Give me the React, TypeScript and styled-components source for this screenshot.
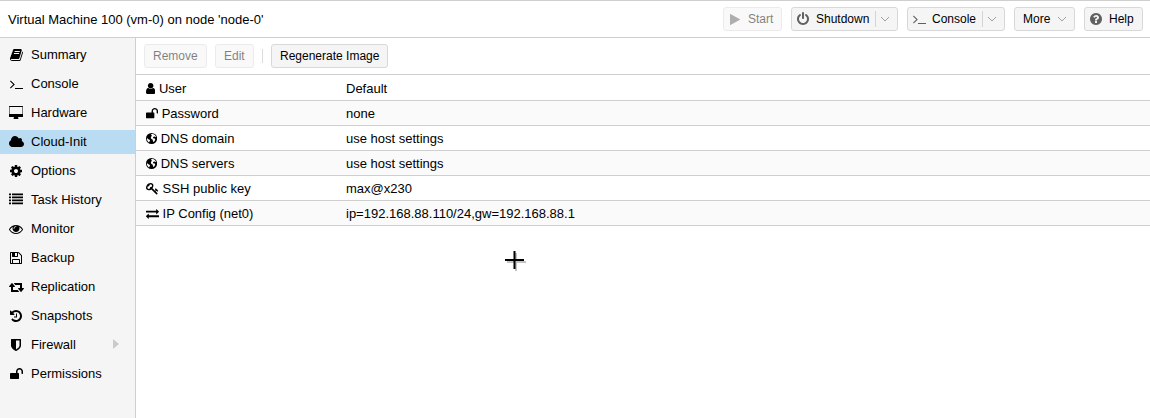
import styled, { createGlobalStyle } from 'styled-components';

const GlobalStyle = createGlobalStyle`
  * {
    box-sizing: border-box;
  }

  body {
    margin: 0;
    background: #fff;
    color: #000;
    font-family: 'Liberation Sans', Arial, sans-serif;
    font-size: 13px;
    overflow: hidden;
  }
`;

// [x offset, width, path], all glyphs are 1792 units high
const icons = {
  book: [64, 1664, 'M1703 478q40 57 18 129l-275 906q-19 64-76.5 107.5t-122.5 43.5h-923q-77 0-148.5-53.5t-99.5-131.5q-24-67-2-127 0-4 3-27t4-37q1-8-3-21.5t-3-19.5q2-11 8-21t16.5-23.5 16.5-23.5q23-38 45-91.5t30-91.5q3-10 .5-30t-.5-28q3-11 17-28t17-23q21-36 42-92t25-90q1-9-2.5-32t.5-28q4-13 22-30.5t22-22.5q19-26 42.5-84.5t27.5-96.5q1-8-3-25.5t-2-26.5q2-8 9-18t18-23 17-21q8-12 16.5-30.5t15-35 16-36 19.5-32 26.5-23.5 36-11.5 47.5 5.5l-1 3q38-9 51-9h761q74 0 114 56t18 130l-274 906q-36 119-71.5 153.5t-128.5 34.5h-869q-27 0-38 15-11 16-1 43 24 70 144 70h923q29 0 56-15.5t35-41.5l300-987q7-22 5-57 38 15 59 43zm-1064 2q-4 13 2 22.5t20 9.5h608q13 0 25.5-9.5t16.5-22.5l21-64q4-13-2-22.5t-20-9.5h-608q-13 0-25.5 9.5t-16.5 22.5zm-83 256q-4 13 2 22.5t20 9.5h608q13 0 25.5-9.5t16.5-22.5l21-64q4-13-2-22.5t-20-9.5h-608q-13 0-25.5 9.5t-16.5 22.5z'],
  terminal: [64, 1664, 'M649 983l-466 466q-10 10-23 10t-23-10l-50-50q-10-10-10-23t10-23l393-393-393-393q-10-10-10-23t10-23l50-50q10-10 23-10t23 10l466 466q10 10 10 23t-10 23zm1079 457v64q0 14-9 23t-23 9h-960q-14 0-23-9t-9-23v-64q0-14 9-23t23-9h960q14 0 23 9t9 23z'],
  desktop: [0, 1856, 'M1728 992v-832q0-13-9.5-22.5t-22.5-9.5h-1600q-13 0-22.5 9.5t-9.5 22.5v832q0 13 9.5 22.5t22.5 9.5h1600q13 0 22.5-9.5t9.5-22.5zm128-832v1088q0 66-47 113t-113 47h-544q0 37 16 77.5t32 71 16 43.5q0 26-19 45t-45 19h-512q-26 0-45-19t-19-45q0-14 16-44t32-70 16-78h-544q-66 0-113-47t-47-113v-1088q0-66 47-113t113-47h1600q66 0 113 47t47 113z'],
  cloud: [64, 1920, 'M1984 1152q0 159-112.5 271.5t-271.5 112.5h-1088q-185 0-316.5-131.5t-131.5-316.5q0-132 71-241.5t187-163.5q-2-28-2-43 0-212 150-362t362-150q158 0 286.5 88t187.5 230q70-62 166-62 106 0 181 75t75 181q0 75-41 138 129 30 213 134.5t84 239.5z'],
  cog: [128, 1536, 'M1152 896q0-106-75-181t-181-75-181 75-75 181 75 181 181 75 181-75 75-181zm512-109v222q0 12-8 23t-20 13l-185 28q-19 54-39 91 35 50 107 138 10 12 10 25t-9 23q-27 37-99 108t-94 71q-12 0-26-9l-138-108q-44 23-91 38-16 136-29 186-7 28-36 28h-222q-14 0-24.5-8.5t-11.5-21.5l-28-184q-49-16-90-37l-141 107q-10 9-25 9-14 0-25-11-126-114-165-168-7-10-7-23 0-12 8-23 15-21 51-66.5t54-70.5q-27-50-41-99l-183-27q-13-2-21-12.5t-8-23.5v-222q0-12 8-23t19-13l186-28q14-46 39-92-40-57-107-138-10-12-10-24 0-10 9-23 26-36 98.5-107.5t94.5-71.5q13 0 26 10l138 107q44-23 91-38 16-136 29-186 7-28 36-28h222q14 0 24.5 8.5t11.5 21.5l28 184q49 16 90 37l142-107q9-9 24-9 13 0 25 10 129 119 165 170 7 8 7 22 0 12-8 23-15 21-51 66.5t-54 70.5q26 50 41 98l183 28q13 2 21 12.5t8 23.5z'],
  list: [0, 1792, 'M0 64h256v224H0zM384 64h1408v224H384zM0 448h256v224H0zM384 448h1408v224H384zM0 832h256v224H0zM384 832h1408v224H384zM0 1216h256v224H0zM384 1216h1408v224H384z'],
  eye: [0, 1792, 'M1664 960q-152-236-381-353 61 104 61 225 0 185-131.5 316.5t-316.5 131.5-316.5-131.5-131.5-316.5q0-121 61-225-229 117-381 353 133 205 333.5 326.5t434.5 121.5 434.5-121.5 333.5-326.5zm-720-384q0-20-14-34t-34-14q-125 0-214.5 89.5t-89.5 214.5q0 20 14 34t34 14 34-14 14-34q0-86 61-147t147-61q20 0 34-14t14-34zm848 384q0 34-20 69-140 230-376.5 368.5t-499.5 138.5-499.5-139-376.5-368q-20-35-20-69t20-69q140-229 376.5-368t499.5-139 499.5 139 376.5 368q20 35 20 69z'],
  floppy: [128, 1536, 'M512 1536h768v-384h-768v384zm896 0h128v-896q0-14-10-38.5t-20-34.5l-281-281q-10-10-34-20t-39-10v416q0 40-28 68t-68 28h-576q-40 0-68-28t-28-68v-416h-128v1280h128v-416q0-40 28-68t68-28h832q40 0 68 28t28 68v416zm-384-928v-320q0-13-9.5-22.5t-22.5-9.5h-192q-13 0-22.5 9.5t-9.5 22.5v320q0 13 9.5 22.5t22.5 9.5h192q13 0 22.5-9.5t9.5-22.5zm640 32v928q0 40-28 68t-68 28h-1344q-40 0-68-28t-28-68v-1344q0-40 28-68t68-28h928q40 0 88 20t76 48l280 280q28 28 48 76t20 88z'],
  retweet: [0, 1920, 'M1280 1504q0 13-9.5 22.5t-22.5 9.5h-960q-8 0-13.5-2t-9-7-5.5-8-3-11.5-1-11.5v-600h-192q-26 0-45-19t-19-45q0-24 15-41l320-384q19-22 49-22t49 22l320 384q15 17 15 41 0 26-19 45t-45 19h-192v384h576q16 0 25 11l160 192q7 10 7 21zm640-416q0 24-15 41l-320 384q-20 23-49 23t-49-23l-320-384q-15-17-15-41 0-26 19-45t45-19h192v-384h-576q-16 0-25-12l-160-192q-7-9-7-20 0-13 9.5-22.5t22.5-9.5h960q8 0 13.5 2t9 7 5.5 8 3 11.5 1 11.5v600h192q26 0 45 19t19 45z'],
  history: [128, 1536, 'M1664 896q0 156-61 298t-164 245-245 164-298 61q-172 0-327-72.5t-264-204.5q-7-10-6.5-22.5t8.5-20.5l137-138q10-9 25-9 16 2 23 12 73 95 179 147t225 52q104 0 198.5-40.5t163.5-109.5 109.5-163.5 40.5-198.5-40.5-198.5-109.5-163.5-163.5-109.5-198.5-40.5q-98 0-188 35.5t-160 101.5l137 138q31 30 14 69-17 40-59 40h-448q-26 0-45-19t-19-45v-448q0-42 40-59 39-17 69 14l130 129q107-101 244.5-156.5t284.5-55.5q156 0 298 61t245 164 164 245 61 298zm-640-288v448q0 14-9 23t-23 9h-320q-14 0-23-9t-9-23v-64q0-14 9-23t23-9h224v-352q0-14 9-23t23-9h64q14 0 23 9t9 23z'],
  shield: [256, 1280, 'M1344 960v-640h-448v1137q119-63 213-137 235-184 235-360zm192-768v768q0 86-33.5 170.5t-83 150-118 127.5-126.5 103-121 77.5-89.5 49.5-42.5 20q-12 6-26 6t-26-6q-16-7-42.5-20t-89.5-49.5-121-77.5-126.5-103-118-127.5-83-150-33.5-170.5v-768q0-26 19-45t45-19h1152q26 0 45 19t19 45z'],
  unlock: [64, 1664, 'M1728 576v256q0 26-19 45t-45 19h-64q-26 0-45-19t-19-45v-256q0-106-75-181t-181-75-181 75-75 181v192h96q40 0 68 28t28 68v576q0 40-28 68t-68 28h-960q-40 0-68-28t-28-68v-576q0-40 28-68t68-28h672v-192q0-185 131.5-316.5t316.5-131.5 316.5 131.5 131.5 316.5z'],
  play: [192, 1408, 'M1576 927l-1328 738q-23 13-39.5 3t-16.5-36v-1472q0-26 16.5-36t39.5 3l1328 738q23 13 23 31t-23 31z'],
  power: [128, 1536, 'M1664 896q0 156-61 298t-164 245-245 164-298 61-298-61-245-164-164-245-61-298q0-182 80.5-343t226.5-270q43-32 95.5-25t83.5 50q32 42 24.5 94.5t-49.5 84.5q-98 74-151.5 181t-53.5 228q0 104 40.5 198.5t109.5 163.5 163.5 109.5 198.5 40.5 198.5-40.5 163.5-109.5 109.5-163.5 40.5-198.5q0-121-53.5-228t-151.5-181q-42-32-49.5-84.5t24.5-94.5q31-43 84-50t95 25q146 109 226.5 270t80.5 343zm-640-768v640q0 52-38 90t-90 38-90-38-38-90v-640q0-52 38-90t90-38 90 38 38 90z'],
  question: [128, 1536, 'M1024 1376v-192q0-14-9-23t-23-9h-192q-14 0-23 9t-9 23v192q0 14 9 23t23 9h192q14 0 23-9t9-23zm256-672q0-88-55.5-163t-138.5-116-170-41q-243 0-371 213-15 24 8 42l132 100q7 6 19 6 16 0 25-12 53-68 86-92 34-24 86-24 48 0 85.5 26t37.5 59q0 38-20 61t-68 45q-63 28-115.5 86.5t-52.5 125.5v36q0 14 9 23t23 9h192q14 0 23-9t9-23q0-19 21.5-49.5t54.5-49.5q32-18 49-28.5t46-35 44.5-48 28-60.5 12.5-81zm384 192q0 209-103 385.5t-279.5 279.5-385.5 103-385.5-103-279.5-279.5-103-385.5 103-385.5 279.5-279.5 385.5-103 385.5 103 279.5 279.5 103 385.5z'],
  user: [256, 1280, 'M1536 1399q0 109-62.5 187t-150.5 78h-854q-88 0-150.5-78t-62.5-187q0-85 8.5-160.5t31.5-152 58.5-131 94-89 134.5-34.5q131 128 313 128t313-128q76 0 134.5 34.5t94 89 58.5 131 31.5 152 8.5 160.5zm-256-887q0 159-112.5 271.5t-271.5 112.5-271.5-112.5-112.5-271.5 112.5-271.5 271.5-112.5 271.5 112.5 112.5 271.5z'],
  globe: [128, 1536, 'M896 128a768 768 0 1 0 0 1536a768 768 0 1 0 0-1536zM960 250L1180 300L1350 410L1480 580L1520 720L1400 640L1260 620L1130 690L1090 800L1180 900L1350 910L1400 1010L1360 1150L1260 1300L1150 1370L1090 1260L1060 1080L940 1000L820 900L800 740L880 600L980 530L860 460L820 350zM270 830L400 960L560 1030L680 1140L650 1260L580 1350L550 1440L420 1340L310 1180L260 990z'],
  key: [0, 1792, 'M832 512q0-80-56-136t-136-56-136 56-56 136q0 42 19 83-41-19-83-19-80 0-136 56t-56 136 56 136 136 56 136-56 56-136q0-42-19-83 41 19 83 19 80 0 136-56t56-136zm851 704q0 17-49 66t-66 49q-9 0-28.5-16t-36.5-33-38.5-40-24.5-26l-96 96 220 220q28 28 28 68 0 42-39 81t-81 39q-40 0-68-28l-671-671q-176 131-365 131-163 0-265.5-102.5t-102.5-265.5q0-160 95-313t248-248 313-95q163 0 265.5 102.5t102.5 265.5q0 189-131 365l355 355 96-96q-3-3-26-24.5t-40-38.5-33-36.5-16-28.5q0-17 49-66t66-49q13 0 23 10 6 6 46 44.5t82 79.5 86.5 86 73 78 28.5 41z'],
  exchange: [0, 1792, 'M1792 1184v192q0 13-9.5 22.5t-22.5 9.5h-1376v192q0 13-9.5 22.5t-22.5 9.5q-12 0-24-10l-319-320q-9-9-9-22 0-14 9-23l320-320q9-9 23-9 13 0 22.5 9.5t9.5 22.5v192h1376q13 0 22.5 9.5t9.5 22.5zm0-544q0 14-9 23l-320 320q-9 9-23 9-13 0-22.5-9.5t-9.5-22.5v-192h-1376q-13 0-22.5-9.5t-9.5-22.5v-192q0-13 9.5-22.5t22.5-9.5h1376v-192q0-14 9-23t23-9q12 0 24 10l319 319q9 9 9 23z'],
} as const;

type IconName = keyof typeof icons;

const Glyph = styled.svg`
  display: block;
  flex: none;
  fill: currentColor;
  fill-rule: evenodd;
`;

const Icon = ({ name, size }: { name: IconName; size: number }) => {
  const [x, width, d] = icons[name];
  return (
    <Glyph viewBox={`${x} 0 ${width} 1792`} width={(width * size) / 1792} height={size}>
      <path d={d} />
    </Glyph>
  );
};

const Page = styled.div`
  display: flex;
  flex-direction: column;
  width: 1150px;
  height: 418px;
  border-top: 1px solid #cfcfcf;
`;

const Header = styled.header`
  display: flex;
  align-items: center;
  flex: none;
  height: 37px;
  padding: 0 7px 0 8px;
  border-bottom: 1px solid #cfcfcf;
`;

const Title = styled.div`
  flex: 1;
  padding-top: 1px;
`;

const HeaderActions = styled.div`
  display: flex;
  gap: 9px;
`;

const Button = styled.button<{ $width: number }>`
  display: flex;
  align-items: center;
  flex: none;
  width: ${props => props.$width}px;
  height: 24px;
  padding: 0 0 0 8px;
  border: 1px solid #d8d8d8;
  border-radius: 3px;
  background: #f5f5f5;
  color: #000;
  font: 12px 'Liberation Sans', Arial, sans-serif;
  white-space: nowrap;

  &:disabled {
    opacity: 0.5;
  }
`;

const ButtonIcon = styled.span`
  display: flex;
  justify-content: center;
  width: 16px;
  margin: 0 5px 0 -5px;
  color: #606060;
`;

const SplitLine = styled.span`
  width: 1px;
  height: 16px;
  margin-left: 6px;
  background: #d4d4d4;
`;

const Chevron = styled.svg<{ $gap: number }>`
  width: 10px;
  height: 6px;
  margin-left: ${props => props.$gap}px;
  fill: none;
  stroke: #a0a0a0;
`;

const Arrow = ({ gap }: { gap: number }) => (
  <Chevron $gap={gap} viewBox="0 0 10 6">
    <path d="M1 1l4 4 4-4" />
  </Chevron>
);

const Body = styled.div`
  display: flex;
  flex: 1;
  min-height: 0;
`;

const Sidebar = styled.nav`
  flex: none;
  width: 136px;
  padding-top: 5px;
  background: #f5f5f5;
  border-right: 1px solid #cfcfcf;
`;

const NavItem = styled.div<{ $active?: boolean }>`
  display: flex;
  align-items: center;
  height: 24px;
  margin-bottom: 5px;
  padding: 0 0 2px 6px;
  background: ${props => (props.$active ? '#b9dcf2' : 'transparent')};
`;

const NavIcon = styled.span`
  display: flex;
  justify-content: center;
  width: 20px;
  margin-right: 5px;
  padding-top: 1px;
`;

const Expander = styled.span`
  margin: 0 16px 0 auto;
  border: solid transparent;
  border-width: 5px 0 5px 6px;
  border-left-color: #cbcbcb;
`;

const Main = styled.main`
  flex: 1;
  min-width: 0;
`;

const Toolbar = styled.div`
  display: flex;
  align-items: center;
  height: 37px;
  padding-left: 8px;
  border-bottom: 1px solid #cfcfcf;
`;

const ToolGap = styled.span`
  width: 8px;
`;

const Separator = styled.span`
  width: 1px;
  height: 14px;
  margin: 0 8px;
  background: #dcdcdc;
`;

const Row = styled.div`
  display: flex;
  align-items: center;
  height: 25px;
  padding: 1px 0 0 10px;
  border-bottom: 1px solid #cfcfcf;

  &:first-of-type {
    height: 26px;
    padding-top: 2px;
  }

  &:nth-child(even) {
    background: #fafafa;
  }
`;

const RowLabel = styled.div`
  display: flex;
  align-items: center;
  gap: 3.6px;
  width: 200px;
`;

const Crosshair = styled.svg`
  position: absolute;
  left: 502px;
  top: 249px;
`;

const navItems: { icon: IconName; label: string }[] = [
  { icon: 'book', label: 'Summary' },
  { icon: 'terminal', label: 'Console' },
  { icon: 'desktop', label: 'Hardware' },
  { icon: 'cloud', label: 'Cloud-Init' },
  { icon: 'cog', label: 'Options' },
  { icon: 'list', label: 'Task History' },
  { icon: 'eye', label: 'Monitor' },
  { icon: 'floppy', label: 'Backup' },
  { icon: 'retweet', label: 'Replication' },
  { icon: 'history', label: 'Snapshots' },
  { icon: 'shield', label: 'Firewall' },
  { icon: 'unlock', label: 'Permissions' },
];

const settings: { icon: IconName; label: string; value: string }[] = [
  { icon: 'user', label: 'User', value: 'Default' },
  { icon: 'unlock', label: 'Password', value: 'none' },
  { icon: 'globe', label: 'DNS domain', value: 'use host settings' },
  { icon: 'globe', label: 'DNS servers', value: 'use host settings' },
  { icon: 'key', label: 'SSH public key', value: 'max@x230' },
  { icon: 'exchange', label: 'IP Config (net0)', value: 'ip=192.168.88.110/24,gw=192.168.88.1' },
];

const App = () => (
  <>
    <GlobalStyle />
    <Page>
      <Header>
        <Title>Virtual Machine 100 (vm-0) on node 'node-0'</Title>
        <HeaderActions>
          <Button $width={59} disabled>
            <ButtonIcon><Icon name="play" size={13} /></ButtonIcon>
            Start
          </Button>
          <Button $width={107}>
            <ButtonIcon><Icon name="power" size={14} /></ButtonIcon>
            Shutdown
            <SplitLine />
            <Arrow gap={4} />
          </Button>
          <Button $width={98}>
            <ButtonIcon><Icon name="terminal" size={14} /></ButtonIcon>
            Console
            <SplitLine />
            <Arrow gap={4} />
          </Button>
          <Button $width={61}>
            More
            <Arrow gap={7} />
          </Button>
          <Button $width={59}>
            <ButtonIcon><Icon name="question" size={14} /></ButtonIcon>
            Help
          </Button>
        </HeaderActions>
      </Header>
      <Body>
        <Sidebar>
          {navItems.map(item => (
            <NavItem key={item.label} $active={item.label === 'Cloud-Init'}>
              <NavIcon><Icon name={item.icon} size={14} /></NavIcon>
              {item.label}
              {item.label === 'Firewall' && <Expander />}
            </NavItem>
          ))}
        </Sidebar>
        <Main>
          <Toolbar>
            <Button $width={63} disabled>Remove</Button>
            <ToolGap />
            <Button $width={39} disabled>Edit</Button>
            <Separator />
            <Button $width={117}>Regenerate Image</Button>
          </Toolbar>
          <section>
            {settings.map(row => (
              <Row key={row.label}>
                <RowLabel>
                  <Icon name={row.icon} size={13} />
                  {row.label}
                </RowLabel>
                {row.value}
              </Row>
            ))}
          </section>
        </Main>
      </Body>
    </Page>
    <Crosshair width="24" height="24" viewBox="0 0 24 24">
      <path d="M14 4v18M5 13h19" stroke="#c4c4c4" strokeWidth="2" />
      <path d="M12.5 2v18M3 11h19" stroke="#000" strokeWidth="2" />
    </Crosshair>
  </>
);

export default App;
